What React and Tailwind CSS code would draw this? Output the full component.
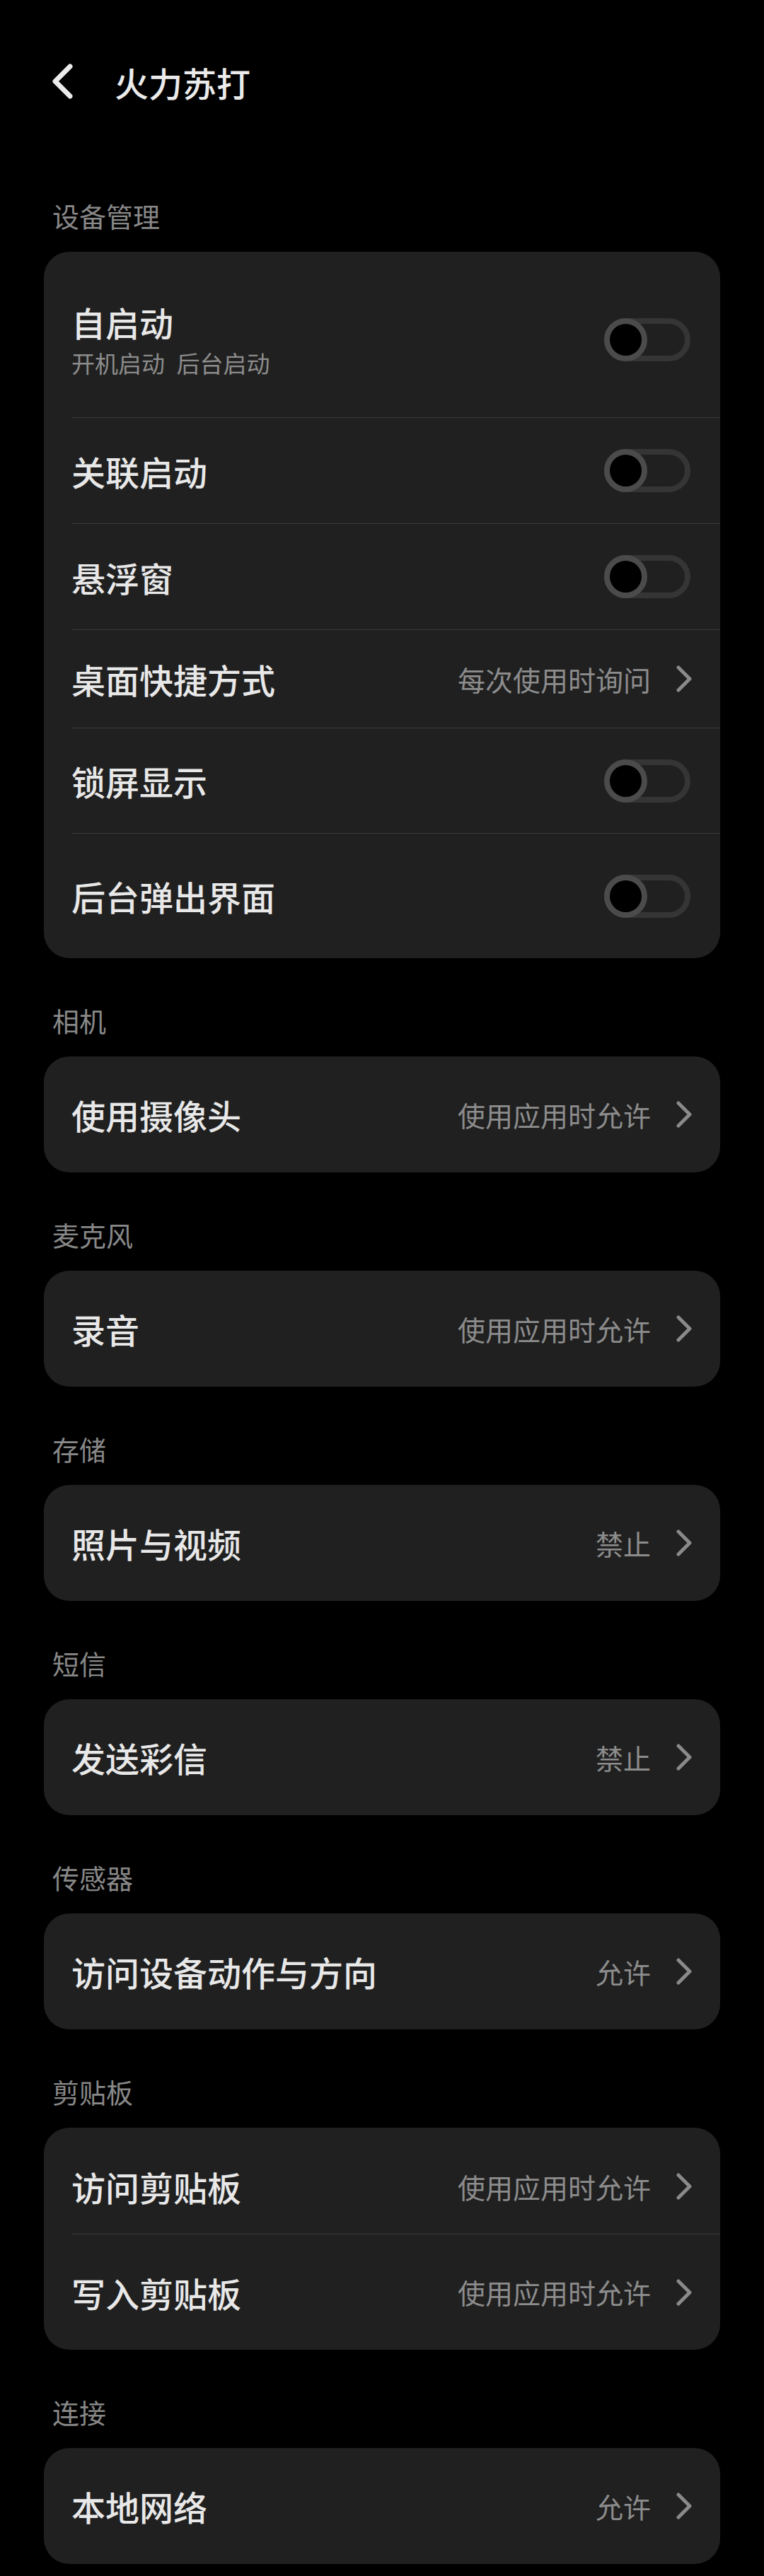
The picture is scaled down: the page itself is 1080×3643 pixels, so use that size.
const font = { fontFamily: '"Noto Sans CJK SC", "Noto Sans", sans-serif' };

function Chevron() {
  return (
    <svg width="24" height="40" viewBox="0 0 24 40" fill="none" className="shrink-0">
      <path d="M3 4 L19 20 L3 36" stroke="#8a8a8a" strokeWidth="5" strokeLinecap="round" strokeLinejoin="round" />
    </svg>
  );
}

function Toggle() {
  return (
    <div className="relative mr-[4px] h-[61px] w-[122px] shrink-0">
      <div className="absolute inset-0 rounded-full border-[8px] border-[#353535]" />
      <div className="absolute left-0 top-0 h-[61px] w-[61px] rounded-full border-[8px] border-[#4b4b4b] bg-black" />
    </div>
  );
}

function Row({ title, sub, value, toggle, className = '' }) {
  return (
    <div className={`flex items-center justify-between pl-[39px] pr-[38px] ${className}`}>
      <div className="flex flex-col">
        <span className="text-[48px] font-medium leading-[48px] text-[#e8e8e8]">{title}</span>
        {sub && <span className="mt-[18px] text-[33px] leading-[33px] text-[#8c8c8c]">{sub}</span>}
      </div>
      {toggle ? (
        <Toggle />
      ) : (
        <div className="flex items-center gap-[36px]">
          <span className="text-[39px] leading-[39px] text-[#8c8c8c]">{value}</span>
          <Chevron />
        </div>
      )}
    </div>
  );
}

function Divider() {
  return <div className="ml-[39px] h-px bg-[#3a3a3a]" />;
}

function SectionHeader({ children, first }) {
  return (
    <div className={`${first ? 'pt-[54px]' : 'pt-[69px]'} pl-[12px]`}>
      <div className="h-[38px] text-[38px] leading-[38px] text-[#888888]">{children}</div>
    </div>
  );
}

function SingleCard({ title, value }) {
  return (
    <div className="mt-[32px] rounded-[36px] bg-[#202020]">
      <Row title={title} value={value} className="h-[164px]" />
    </div>
  );
}

export default function App() {
  return (
    <div className="min-h-[3643px] w-[1080px] bg-black pb-[17px]" style={font}>
      <div className="flex h-[232px] items-center">
        <svg width="40" height="56" viewBox="0 0 40 56" fill="none" className="ml-[66px]">
          <path d="M33 6 L12 27 L33 48" stroke="#ebebeb" strokeWidth="7" strokeLinecap="round" strokeLinejoin="round" />
        </svg>
        <span className="ml-[56px] text-[48px] font-medium leading-[48px] text-[#ebebeb]">火力苏打</span>
      </div>

      <div className="px-[62px]">
        <SectionHeader first>设备管理</SectionHeader>
        <div className="mt-[32px] rounded-[36px] bg-[#202020]">
          <Row title="自启动" sub={'开机启动\u2002后台启动'} toggle className="h-[234px] pt-[14px]" />
          <Divider />
          <Row title="关联启动" toggle className="h-[149px]" />
          <Divider />
          <Row title="悬浮窗" toggle className="h-[149px]" />
          <Divider />
          <Row title="桌面快捷方式" value="每次使用时询问" className="h-[138px]" />
          <Divider />
          <Row title="锁屏显示" toggle className="h-[148px]" />
          <Divider />
          <Row title="后台弹出界面" toggle className="h-[176px]" />
        </div>

        <SectionHeader>相机</SectionHeader>
        <SingleCard title="使用摄像头" value="使用应用时允许" />

        <SectionHeader>麦克风</SectionHeader>
        <SingleCard title="录音" value="使用应用时允许" />

        <SectionHeader>存储</SectionHeader>
        <SingleCard title="照片与视频" value="禁止" />

        <SectionHeader>短信</SectionHeader>
        <SingleCard title="发送彩信" value="禁止" />

        <SectionHeader>传感器</SectionHeader>
        <SingleCard title="访问设备动作与方向" value="允许" />

        <SectionHeader>剪贴板</SectionHeader>
        <div className="mt-[32px] rounded-[36px] bg-[#202020]">
          <Row title="访问剪贴板" value="使用应用时允许" className="h-[150px] pt-[16px]" />
          <Divider />
          <Row title="写入剪贴板" value="使用应用时允许" className="h-[163px]" />
        </div>

        <SectionHeader>连接</SectionHeader>
        <SingleCard title="本地网络" value="允许" />
      </div>
    </div>
  );
}
